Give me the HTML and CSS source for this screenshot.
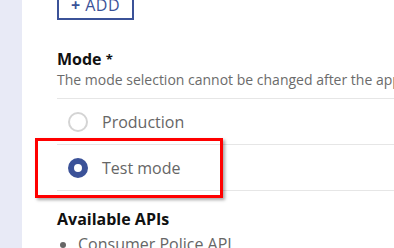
FILE: index.html
```html
<!DOCTYPE html>
<html lang="en">
<head>
  <meta charset="UTF-8" />
  <meta name="viewport" content="width=device-width, initial-scale=1.0"/>
  <title>Application settings</title>
  <link rel="stylesheet" href="styles.css">
</head>
<body>

  <div class="page">
    <div class="sidebar"></div>
    <div class="content">
      <button class="add-btn"><span class="plus">+</span> ADD</button>

      <h3 class="field-title">Mode <span class="req">*</span></h3>
      <p class="field-help">The mode selection cannot be changed after the application has been created.</p>

      <div class="radio-list">
        <label class="radio-row">
          <span class="radio"></span>
          <span class="radio-label">Production</span>
        </label>
        <label class="radio-row">
          <span class="radio checked"></span>
          <span class="radio-label">Test mode</span>
          <span class="highlight"></span>
        </label>
      </div>

      <h3 class="field-title apis">Available APIs</h3>
      <ul class="api-list">
        <li>Consumer Police API</li>
      </ul>
    </div>
  </div>

</body>
</html>
```

FILE: styles.css
```css
* {
  margin: 0; padding: 0; box-sizing: border-box;
}
body {
  font-family: 'Open Sans', 'Lato', sans-serif;
  background: #fff;
  color: #222;
  overflow: hidden;
}
.page {
  display: flex;
  min-height: 248px;
}
.sidebar {
  width: 22px;
  flex-shrink: 0;
  background: #e8eaf6;
}
.content {
  flex: 1;
  padding-left: 35px;
  overflow: hidden;
}
.add-btn {
  display: block;
  margin-top: -16px;
  width: 77px;
  height: 36px;
  padding-top: 5px;
  border: 2px solid #3b5298;
  background: #fff;
  color: #3b5298;
  font-family: inherit;
  font-size: 16px;
  letter-spacing: 0.5px;
}
.plus {
  font-weight: 700;
}
.field-title {
  margin-top: 29px;
  font-size: 16px;
  font-weight: 700;
  color: #111;
  line-height: 20px;
}
.req {
  font-size: 13px;
  vertical-align: top;
}
.field-help {
  margin-top: 1px;
  font-size: 14px;
  color: #6b6b6b;
  white-space: nowrap;
  line-height: 20px;
  padding-bottom: 8px;
  border-bottom: 1px solid #e6e6e6;
}
.radio-row {
  position: relative;
  display: flex;
  align-items: center;
  height: 46px;
  padding-left: 11px;
  border-bottom: 1px solid #e6e6e6;
}
.radio {
  width: 20px;
  height: 20px;
  border: 2px solid #d4d4d4;
  border-radius: 50%;
  margin-right: 14px;
}
.radio.checked {
  border: 6px solid #3b5298;
  background: #fff;
}
.radio-label {
  font-size: 16px;
  color: #666;
}
.highlight {
  position: absolute;
  left: -22px;
  top: -7px;
  width: 188px;
  height: 60px;
  border: 3px solid #ff0000;
  box-shadow: 2px 2px 3px rgba(0,0,0,0.35);
}
.apis {
  margin-top: 18px;
}
.api-list {
  margin-top: 4px;
  padding-left: 21px;
  font-size: 16px;
  color: #666;
}
```
